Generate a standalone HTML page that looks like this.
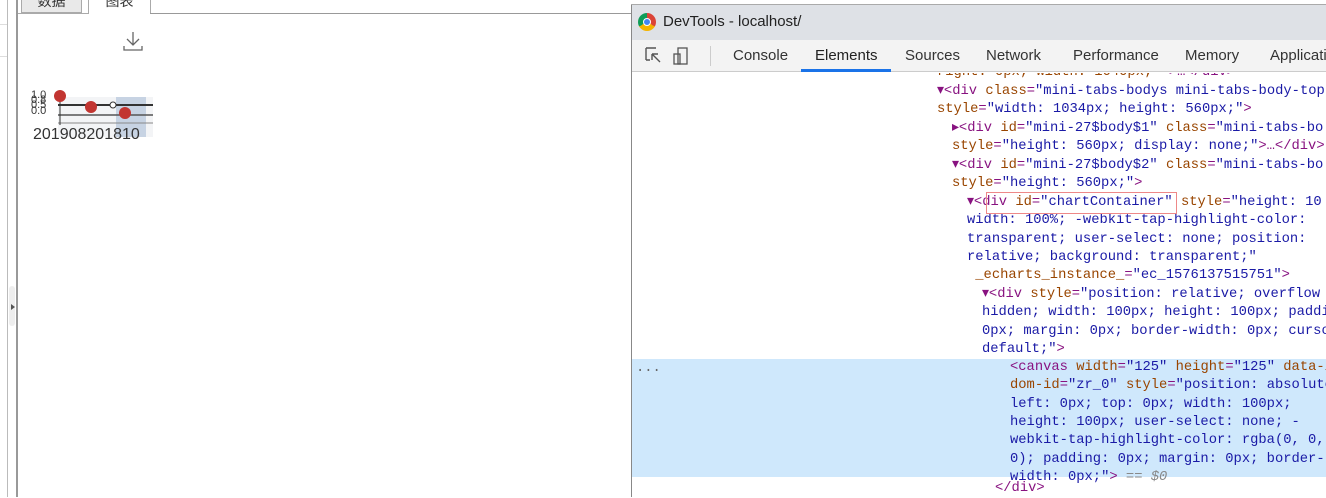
<!DOCTYPE html>
<html><head><meta charset="utf-8"><style>
*{margin:0;padding:0;box-sizing:border-box}
body{width:1326px;height:497px;overflow:hidden;background:#fff;position:relative;font-family:"Liberation Sans","Noto Sans CJK SC",sans-serif}
.a{position:absolute}
.code{font-family:"Liberation Mono",monospace;font-size:13.8px;color:#881280;white-space:pre;line-height:18.35px}
.n{color:#994500}.v{color:#1a1aa6}
</style></head><body>
<!-- left page -->
<div class="a" style="left:7px;top:0;width:1px;height:497px;background:#bbb"></div>
<div class="a" style="left:0;top:24px;width:7px;height:1px;background:#ddd"></div>
<div class="a" style="left:0;top:56px;width:7px;height:1px;background:#ddd"></div>
<div class="a" style="left:16px;top:0;width:2px;height:497px;background:#999"></div>
<div class="a" style="left:9px;top:286px;width:6px;height:40px;background:#eee;border-radius:3px"></div>
<div class="a" style="left:11px;top:304px;width:0;height:0;border-left:4px solid #555;border-top:3px solid transparent;border-bottom:3px solid transparent"></div>
<div class="a" style="left:21px;top:-8px;width:61px;height:21px;background:#e9e9e9;border:1px solid #aaa;font-size:14px;color:#333;text-align:center;line-height:16px">数据</div>
<div class="a" style="left:88px;top:-8px;width:63px;height:22px;background:#fff;border:1px solid #aaa;border-bottom:none;font-size:14px;color:#333;text-align:center;line-height:16px">图表</div>
<div class="a" style="left:18px;top:13px;width:70px;height:1px;background:#aaa"></div>
<div class="a" style="left:150px;top:13px;width:482px;height:1px;background:#999"></div>
<svg class="a" style="left:122px;top:30px" width="22" height="22"><path d="M11 2v13M5 9l6 6 6-6M2 16v4h18v-4" fill="none" stroke="#666" stroke-width="1.3"/></svg>
<svg class="a" style="left:28px;top:85px" width="125" height="55">
<rect x="30" y="12" width="118" height="40" fill="#f3f4f6"/>
<rect x="88" y="12" width="30" height="40" fill="#c7d3e3"/>
<line x1="30" y1="20" x2="148" y2="20" stroke="#333" stroke-width="2"/>
<line x1="30" y1="30" x2="148" y2="30" stroke="#555" stroke-width="1.5"/>
<line x1="30" y1="38" x2="148" y2="38" stroke="#888"/>
<line x1="32" y1="6" x2="32" y2="40" stroke="#333"/>
<circle cx="32" cy="11" r="6" fill="#c23531"/><circle cx="63" cy="22" r="6" fill="#c23531"/><circle cx="97" cy="28" r="6" fill="#c23531"/>
<circle cx="85" cy="20" r="3" fill="#fff" stroke="#333"/>
<text x="3" y="13" font-size="11" fill="#333">1.0</text><text x="3" y="18" font-size="11" fill="#333">0.8</text><text x="3" y="23" font-size="11" fill="#333">0.5</text><text x="3" y="29" font-size="11" fill="#333">0.0</text>
<text x="5" y="54" font-size="16" fill="#333" font-family="Liberation Sans">201908201810</text>
</svg>
<!-- devtools -->
<div class="a" style="left:631px;top:0;width:695px;height:497px;border-left:1px solid #888;background:#fff"></div>
<div class="a" style="left:631px;top:0;width:695px;height:5px;background:#fff;border-bottom:1px solid #aaa"></div>
<div class="a" style="left:632px;top:5px;width:694px;height:35px;background:#dee1e6"></div>
<div class="a" style="left:638px;top:13px;width:18px;height:18px;border-radius:50%;background:conic-gradient(#db4437 0 120deg,#f4b400 120deg 240deg,#0f9d58 240deg 360deg)"></div>
<div class="a" style="left:643px;top:18px;width:8px;height:8px;border-radius:50%;background:#4285f4;border:1px solid #fff"></div>
<div class="a" style="left:663px;top:13px;font-size:15px;color:#222">DevTools - localhost/</div>
<div class="a" style="left:632px;top:40px;width:694px;height:32px;background:#f3f3f3;border-bottom:1px solid #ccc"></div>
<svg class="a" style="left:644px;top:46px" width="50" height="20"><path d="M2 2h10M2 2v12M2 14h4M8 8l8 8M8 8v6M8 8h6" fill="none" stroke="#555" stroke-width="1.4"/><rect x="34" y="2" width="9" height="16" fill="none" stroke="#555" stroke-width="1.3"/><rect x="30" y="8" width="6" height="10" fill="none" stroke="#555" stroke-width="1.3"/></svg>
<div class="a" style="left:710px;top:46px;width:1px;height:20px;background:#ccc"></div>
<div class="a" style="top:47px;left:733px;font-size:15px;color:#333">Console</div>
<div class="a" style="top:47px;left:815px;font-size:15px;color:#222">Elements</div>
<div class="a" style="top:69px;left:801px;width:90px;height:3px;background:#1a73e8"></div>
<div class="a" style="top:47px;left:905px;font-size:15px;color:#333">Sources</div>
<div class="a" style="top:47px;left:986px;font-size:15px;color:#333">Network</div>
<div class="a" style="top:47px;left:1073px;font-size:15px;color:#333">Performance</div>
<div class="a" style="top:47px;left:1185px;font-size:15px;color:#333">Memory</div>
<div class="a" style="top:47px;left:1270px;font-size:15px;color:#333;white-space:nowrap">Application</div>
<div class="a" style="left:632px;top:359px;width:694px;height:118px;background:#cfe8fc"></div>
<div class="a code" style="left:636px;top:360px;color:#666">...</div>
<div class="a code" style="left:937px;top:64px;clip-path:inset(9px 0 0 0)"><span class="n">right: 0px; width: 1040px;</span> ">…&lt;/div&gt;</div>
<div class="a code" style="left:937px;top:83px">▾&lt;div <span class="n">class</span>=<span class="v">"mini-tabs-bodys mini-tabs-body-top</span>
<span class="n">style</span>=<span class="v">"width: 1034px; height: 560px;"</span>&gt;</div>
<div class="a code" style="left:952px;top:120px">▸&lt;div <span class="n">id</span>=<span class="v">"mini-27$body$1"</span> <span class="n">class</span>=<span class="v">"mini-tabs-bo</span>
<span class="n">style</span>=<span class="v">"height: 560px; display: none;"</span>&gt;…&lt;/div&gt;
▾&lt;div <span class="n">id</span>=<span class="v">"mini-27$body$2"</span> <span class="n">class</span>=<span class="v">"mini-tabs-bo</span>
<span class="n">style</span>=<span class="v">"height: 560px;"</span>&gt;</div>
<div class="a code" style="left:967px;top:194px">▾&lt;div <span class="n">id</span>=<span class="v">"chartContainer"</span> <span class="n">style</span>=<span class="v">"height: 10</span>
<span class="v">width: 100%; -webkit-tap-highlight-color:
transparent; user-select: none; position:
relative; background: transparent;"</span>
<span class="n"> _echarts_instance_</span>=<span class="v">"ec_1576137515751"</span>&gt;</div>
<div class="a" style="left:986px;top:192px;width:191px;height:22px;border:1px solid #e88"></div>
<div class="a code" style="left:982px;top:286px">▾&lt;div <span class="n">style</span>=<span class="v">"position: relative; overflow
hidden; width: 100px; height: 100px; paddi
0px; margin: 0px; border-width: 0px; curso
default;"</span>&gt;</div>
<div class="a code" style="left:1010px;top:359px">&lt;canvas <span class="n">width</span>=<span class="v">"125"</span> <span class="n">height</span>=<span class="v">"125"</span> <span class="n">data-i</span>
<span class="n">dom-id</span>=<span class="v">"zr_0"</span> <span class="n">style</span>=<span class="v">"position: absolute
left: 0px; top: 0px; width: 100px;
height: 100px; user-select: none; -
webkit-tap-highlight-color: rgba(0, 0,
0); padding: 0px; margin: 0px; border-
width: 0px;"</span>&gt; <span style="color:#888;font-style:italic">== $0</span></div>
<div class="a code" style="left:995px;top:480px">&lt;/div&gt;</div>
</body></html>
